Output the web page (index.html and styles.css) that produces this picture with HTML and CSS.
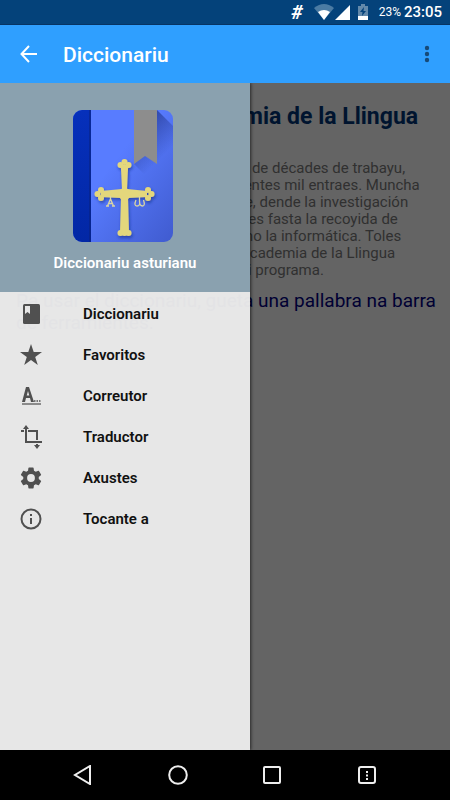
FILE: index.html
```html
<!DOCTYPE html>
<html lang="ast">
<head>
<meta charset="utf-8">
<meta name="viewport" content="width=device-width, initial-scale=1">
<title>Diccionariu</title>
<link rel="stylesheet" href="styles.css">
</head>
<body>
<div class="status">
  <span class="hash">#</span>
  <svg class="wifi" width="20" height="16" viewBox="0 0 20 16"><path d="M0 4Q10-4 20 4L10 16Z" fill="#4b7ba3"/><path d="M4 8Q10 4 16 8L10 16Z" fill="#fff"/></svg>
  <svg class="signal" width="15" height="15" viewBox="0 0 15 15"><path d="M15 0V15H0Z" fill="#fff"/></svg>
  <svg class="battery" width="10" height="16" viewBox="0 0 10 16"><path d="M3 0h4v2h3v14H0V2h3Z" fill="#6389aa"/><path d="M0 12h10v4H0Z" fill="#fff"/><path d="M6 3 2 8h2.500L4 12l4-5H5.500Z" fill="#04427a"/></svg>
  <span class="percent">23%</span>
  <span class="clock">23:05</span>
</div>
<header class="appbar">
  <button class="icon-button" aria-label="Atrás"><svg width="18" height="18" viewBox="0 0 18 18" fill="none" stroke="#fff" stroke-width="2"><path d="M17 9H2M9 1 1.500 9 9 17"/></svg></button>
  <h1>Diccionariu</h1>
  <button class="icon-button more" aria-label="Más opciones"><svg width="6" height="18" viewBox="0 0 6 18" fill="#174a78"><circle cx="3" cy="3" r="2.200"/><circle cx="3" cy="9" r="2.200"/><circle cx="3" cy="15" r="2.200"/></svg></button>
</header>
<div class="stage">
  <main class="article">
    <h2>Diccionariu de l'Academia de la Llingua</h2>
    <p class="about">a de décades de trabayu,<br>ientes mil entraes. Muncha<br>te, dende la investigación<br>nes fasta la recoyida de<br>mo la informática. Toles<br>Academia de la Llingua<br>ei programa.</p>
    <p class="hint">Pa usar el diccionariu, gueta una pallabra na barra de ferramientes.</p>
  </main>
  <aside class="drawer">
    <div class="cover">
      <svg width="100" height="132" viewBox="0 0 100 132">
        <defs>
          <linearGradient id="book" x1="0" y1="0" x2="1" y2="1"><stop offset=".4" stop-color="#587cff"/><stop offset="1" stop-color="#405bcf"/></linearGradient>
          <linearGradient id="spine" x1="0" y1="0" x2="0" y2="1"><stop offset="0" stop-color="#0630bb"/><stop offset="1" stop-color="#0227a5"/></linearGradient>
          <linearGradient id="fold" gradientUnits="userSpaceOnUse" x1="42" y1="42" x2="68" y2="68"><stop offset="0" stop-color="#1d2f80" stop-opacity=".65"/><stop offset="1" stop-color="#1d2f80" stop-opacity="0"/></linearGradient>
          <clipPath id="edge"><rect width="100" height="132" rx="9"/></clipPath>
          <filter id="shade" x="-20%" y="-20%" width="140%" height="140%"><feDropShadow dx="1" dy="2" stdDeviation="1.500" flood-color="#142d83" flood-opacity=".6"/></filter>
        </defs>
        <g clip-path="url(#edge)">
          <rect width="100" height="132" fill="url(#book)"/>
          <path d="M84 0 100 16V93L61 54 84 30Z" fill="url(#fold)"/>
          <rect width="18" height="132" fill="url(#spine)"/>
          <path d="M17 0V132" stroke="#0a2179"/>
          <path d="M61 0H84V54L72 46 61 54Z" fill="#8d8d8d"/>
          <g fill="#e4d77c" filter="url(#shade)">
            <path d="M48 58H55L54 79 74 81V87L55 88 56 122H47L48 88 28 87V81L49 79Z"/>
            <circle cx="51.500" cy="84" r="6"/>
            <circle cx="51.500" cy="52" r="3"/><circle cx="47.500" cy="55" r="3"/><circle cx="55.500" cy="55" r="3"/><path d="M47 55h9l-2 7h-5z"/>
            <circle cx="24.500" cy="84" r="3"/><circle cx="28" cy="80" r="3"/><circle cx="28" cy="88" r="3"/>
            <circle cx="78.500" cy="84" r="3"/><circle cx="75" cy="80" r="3"/><circle cx="75" cy="88" r="3"/>
            <circle cx="47.500" cy="123" r="3"/><circle cx="55.500" cy="123" r="3"/><circle cx="51.500" cy="123" r="3"/>
          </g>
          <g fill="none" stroke="#d9d5a4" stroke-width="1.300"><path d="M33 96h3M39 96h3M34.500 96l3-7 3 7M35.500 93.500h4M37.500 86v3"/><path d="M63 90q-2.500 6 1 6t2.500-5q0 5 3 5t1-6M66.500 86v5"/></g>
        </g>
      </svg>
      <strong>Diccionariu asturianu</strong>
    </div>
    <nav class="menu">
      <a href="#"><svg width="24" height="24" viewBox="0 0 24 24"><rect x="4" y="2" width="17" height="20" rx="1.500" fill="#505050"/><path d="M6 4h5v8L8.500 10 6 12Z" fill="#e7e7e7"/></svg>Diccionariu</a>
      <a href="#"><svg width="24" height="24" viewBox="0 0 24 24"><path d="m12 1 2.700 8H23l-6.800 5 2.600 8-6.800-5-6.800 5 2.600-8L1 9h8.300Z" fill="#505050"/></svg>Favoritos</a>
      <a href="#"><svg width="24" height="24" viewBox="0 0 24 24"><path fill="#505050" fill-rule="evenodd" d="M3 18 7 3h3l5 15h-3l-1-4H7l-1 4ZM7.700 11.500h2.600L9 7Z"/><path d="M15 17h1.500m1 0H19m1 0h1.500" stroke="#505050" stroke-width="1.500"/><path d="M3 20h19" stroke="#8b8b8b" stroke-width="2"/></svg>Correutor</a>
      <a href="#"><svg width="24" height="24" viewBox="0 0 24 24"><path d="M7 3v14h16M2 6h3m4 0h9v9m0 4v3" fill="none" stroke="#505050" stroke-width="2"/><path d="m4 4 3-4 3 4ZM15 20h6l-3 4Z" fill="#505050"/></svg>Traductor</a>
      <a href="#"><svg width="26" height="26" viewBox="0 0 24 24"><path fill="#505050" d="M19.140 12.940c.04-.3.060-.61.060-.94 0-.32-.02-.64-.07-.94l2.030-1.580a.49.49 0 0 0 .12-.61l-1.920-3.320a.49.49 0 0 0-.59-.22l-2.390.96c-.5-.38-1.030-.7-1.620-.94L14.400 2.810A.48.48 0 0 0 13.920 2.400h-3.840a.47.47 0 0 0-.47.41L9.250 5.350c-.59.24-1.130.57-1.620.94l-2.390-.96a.48.48 0 0 0-.59.22L2.740 8.870c-.12.210-.08.47.12.61l2.030 1.580a7.500 7.500 0 0 0-.02 1.880l-2.030 1.580a.49.49 0 0 0-.12.61l1.920 3.320c.12.220.37.29.59.22l2.390-.96c.5.38 1.030.7 1.620.94l.36 2.540c.05.24.24.41.48.41h3.840c.24 0 .44-.17.47-.41l.36-2.540c.59-.24 1.130-.56 1.620-.94l2.390.96c.22.080.47 0 .59-.22l1.920-3.320a.47.47 0 0 0-.12-.61ZM12 15.600a3.600 3.600 0 1 1 0-7.200 3.600 3.600 0 0 1 0 7.200Z"/></svg>Axustes</a>
      <a href="#"><svg width="24" height="24" viewBox="0 0 24 24"><circle cx="12" cy="12" r="9.500" fill="none" stroke="#505050" stroke-width="2"/><path d="M12 7v2m0 2v6" stroke="#505050" stroke-width="2"/></svg>Tocante a</a>
    </nav>
  </aside>
</div>
<footer class="navbar">
  <button aria-label="Volver"><svg width="20" height="20" viewBox="0 0 20 20"><path d="M17 1v18L2 10Z"/></svg></button>
  <button aria-label="Aniciu"><svg width="20" height="20" viewBox="0 0 20 20"><circle cx="10" cy="10" r="8.800"/></svg></button>
  <button aria-label="Recientes"><svg width="20" height="20" viewBox="0 0 20 20"><rect x="2" y="2" width="16" height="16" rx="1"/></svg></button>
  <button aria-label="Menú"><svg width="20" height="20" viewBox="0 0 20 20"><rect x="2" y="2" width="16" height="16" rx="2"/><path d="M10 6v9" stroke-dasharray="2 1.500"/></svg></button>
</footer>
</body>
</html>
```
FILE: styles.css
```css
* { box-sizing: border-box; }
body {
  margin: 0;
  min-height: 100vh;
  display: flex;
  flex-direction: column;
  font-family: Roboto, sans-serif;
  background: #646464;
}
h1, h2, p { margin: 0; }
button { padding: 0; border: 0; background: none; }
svg { display: block; flex: none; }

.status {
  height: 25px;
  padding-right: 8px;
  display: flex;
  align-items: center;
  justify-content: flex-end;
  color: #fff;
  background: #04427a;
  border-bottom: 1px solid #073464;
}
.hash { font-size: 20px; font-weight: 700; font-style: italic; margin-right: 11px; }
.signal { margin-left: 1px; }
.battery { margin: 0 11px 0 8px; }
.percent { font-size: 12px; margin-right: 3px; }
.clock { font-size: 15px; font-weight: 500; }

.appbar {
  height: 58px;
  padding: 0 20px;
  display: flex;
  align-items: center;
  color: #fff;
  background: #2f9fff;
}
.appbar h1 { flex: 1; margin-left: 25px; padding-top: 2px; font-size: 21px; font-weight: 500; }

.stage { position: relative; flex: 1; overflow: hidden; }
.article { padding: 20px 10px 20px 16px; color: #00142f; }
.article h2 { font-size: 23px; line-height: 28px; white-space: nowrap; }
.about {
  margin: 29px 0 11px 224px;
  font-size: 15px;
  line-height: 17px;
  color: #303030;
  white-space: nowrap;
}
.hint { font-size: 19px; line-height: 22px; color: #000033; }

.drawer {
  position: absolute;
  inset: 0 auto 0 0;
  width: 250px;
  background: rgba(236, 236, 236, 0.96);
  box-shadow: 1px 0 3px rgba(0, 0, 0, 0.6);
}
.cover {
  height: 209px;
  padding-top: 27px;
  display: flex;
  flex-direction: column;
  align-items: center;
  gap: 12px;
  color: #fff;
  background: #8aa1af;
}
.cover svg { margin-right: 4px; }
.cover strong { font-size: 15px; line-height: 18px; font-weight: 600; }
.menu { padding-top: 1px; }
.menu a {
  height: 41px;
  padding-left: 19px;
  display: grid;
  grid-template-columns: 24px auto;
  column-gap: 40px;
  align-items: center;
  justify-items: center;
  justify-content: start;
  font-size: 15px;
  font-weight: 600;
  color: #111;
  text-decoration: none;
}

.navbar {
  height: 50px;
  padding: 0 36px;
  display: flex;
  background: #000;
}
.navbar button { flex: 1; display: grid; place-items: center; }
.navbar svg { fill: none; stroke: #eee; stroke-width: 2; }
```
